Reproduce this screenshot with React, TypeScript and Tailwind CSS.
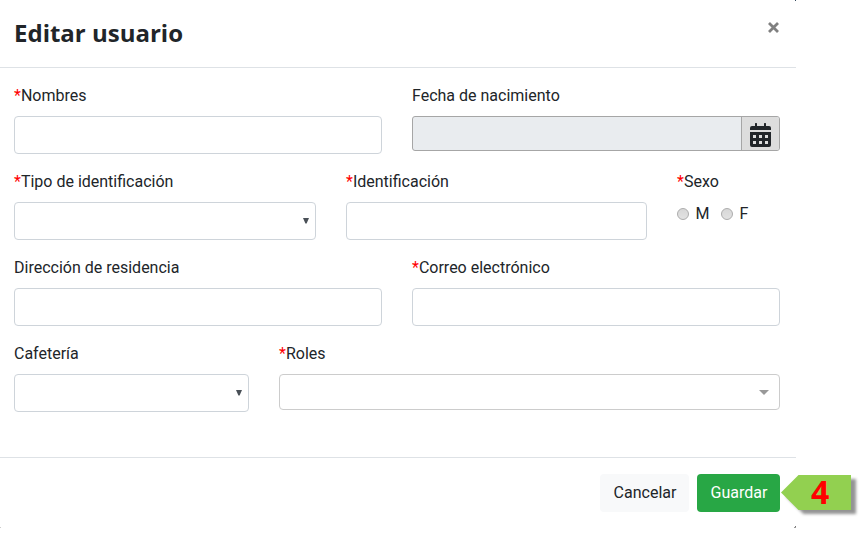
import React from "react";

const inputClass = "h-[38px] w-full rounded border border-[#ced4da] bg-white";

function Label({ children, required = false }: { children: React.ReactNode; required?: boolean }) {
  return (
    <div className="mb-2 h-6 whitespace-nowrap leading-6">
      {required && <span className="text-[#ff0000]">*</span>}
      {children}
    </div>
  );
}

function Field({ label, required, className }: { label: string; required?: boolean; className: string }) {
  return (
    <div className={className}>
      <Label required={required}>{label}</Label>
      <input aria-label={label} className={inputClass} />
    </div>
  );
}

function SelectField({ label, required, className }: { label: string; required?: boolean; className: string }) {
  return (
    <div className={className}>
      <Label required={required}>{label}</Label>
      <div className={`${inputClass} flex items-center justify-end pr-[6px]`}>
        <svg width="6" height="6" viewBox="0 0 6 6" fill="#495057">
          <path d="M0 0H6L3.6 5.4H2.4Z" />
        </svg>
      </div>
    </div>
  );
}

function CalendarIcon() {
  return (
    <svg width="21" height="24" viewBox="0 0 21 24" fill="#212529">
      <path d="M0 7V5Q0 3 2 3H5V.6Q5 0 5.6 0H6.4Q7 0 7 .6V3H14V.6Q14 0 14.6 0H15.4Q16 0 16 .6V3H19Q21 3 21 5V7H0Z" />
      <path
        fillRule="evenodd"
        d="M0 9H21V22Q21 24 19 24H2Q0 24 0 22ZM3 12V15H6V12ZM9 12V15H12V12ZM15 12V15H18V12ZM3 18V21H6V18ZM9 18V21H12V18ZM15 18V21H18V18Z"
      />
    </svg>
  );
}

function RadioOption({ label }: { label: string }) {
  return (
    <label className="flex h-6 items-center gap-[6.5px]">
      <span className="h-3 w-3 rounded-full border border-[#acacac] bg-linear-to-b from-[#d7d7d7] to-[#e2e2e2]" />
      {label}
    </label>
  );
}

export default function App() {
  return (
    <div className="relative h-[541px] w-[862px] overflow-hidden bg-white font-['Roboto','Liberation_Sans',sans-serif] text-base text-[#212529]">
      <div className="h-[528px] w-[796px]">
        <header className="flex h-[68px] items-start justify-between border-b border-[#dee2e6] pl-[14px] pr-4">
          <h5 className="mt-[15px] font-['Open_Sans','Noto_Sans',sans-serif] text-2xl font-bold leading-9">Editar usuario</h5>
          <button aria-label="Cerrar" className="mr-[1px] mt-[21.5px]">
            <svg width="11" height="11" viewBox="0 0 11 11" stroke="#808080" strokeWidth="2.8" strokeLinecap="butt">
              <path d="M1 1L10 10M10 1L1 10" />
            </svg>
          </button>
        </header>

        <main className="flex h-[389px] flex-col gap-4 pl-[14px] pr-4 pt-4">
          <div className="flex gap-[30px]">
            <Field label="Nombres" required className="w-[368px]" />
            <div className="w-[368px]">
              <Label>Fecha de nacimiento</Label>
              <div className="flex h-[35px] overflow-hidden rounded-[3px] border border-[#a6a6a6] bg-[#e9ecef]">
                <div className="flex-1" />
                <div className="flex w-[38px] justify-center border-l border-[#a6a6a6] bg-[#dddddd] pt-[6px]">
                  <CalendarIcon />
                </div>
              </div>
            </div>
          </div>

          <div className="flex gap-[30px]">
            <SelectField label="Tipo de identificación" required className="w-[302px]" />
            <Field label="Identificación" required className="w-[301px]" />
            <div>
              <Label required>Sexo</Label>
              <div className="flex gap-[11.5px]">
                <RadioOption label="M" />
                <RadioOption label="F" />
              </div>
            </div>
          </div>

          <div className="flex gap-[30px]">
            <Field label="Dirección de residencia" className="w-[368px]" />
            <Field label="Correo electrónico" required className="w-[368px]" />
          </div>

          <div className="flex gap-[30px]">
            <SelectField label="Cafetería" className="w-[235px]" />
            <div className="w-[501px]">
              <Label required>Roles</Label>
              <div className="flex h-9 items-center justify-end rounded border border-[#cccccc] pr-[10px]">
                <svg width="10" height="5" viewBox="0 0 10 5" fill="#999999">
                  <path d="M0 0H10L5 5Z" />
                </svg>
              </div>
            </div>
          </div>
        </main>

        <footer className="flex h-[71px] justify-end gap-2 border-t border-[#dee2e6] pr-4 pt-4">
          <button className="h-[38px] w-[89px] rounded bg-[#f8f9fa] pl-px">Cancelar</button>
          <button className="h-[38px] w-[83px] rounded bg-[#28a745] pl-px text-white">Guardar</button>
        </footer>
      </div>

      <div className="absolute left-[795px] top-0 h-px w-px bg-[#34495e]" />
      <div className="absolute left-[794px] top-[527px] h-px w-[2px] bg-[#999999]" />
      <div className="absolute left-[795px] top-[526px] h-px w-px bg-[#777777]" />
      <div className="absolute left-0 top-[527px] h-px w-px bg-[#cccccc]" />

      <div className="absolute left-[781px] top-[475px] h-[35px] w-[70px]">
        <svg className="absolute left-0 top-0 overflow-visible drop-shadow-[5px_4px_1.5px_rgba(0,0,0,0.42)]" width="70" height="35" viewBox="0 0 70 35">
          <path d="M0 17.5L17.5 0H70V35H17.5Z" fill="#92d050" />
        </svg>
        <span className="absolute left-[30px] top-[-1px] font-['Open_Sans','Noto_Sans',sans-serif] text-[32px] font-bold leading-[35px] text-[#ff0000]">4</span>
      </div>
    </div>
  );
}
